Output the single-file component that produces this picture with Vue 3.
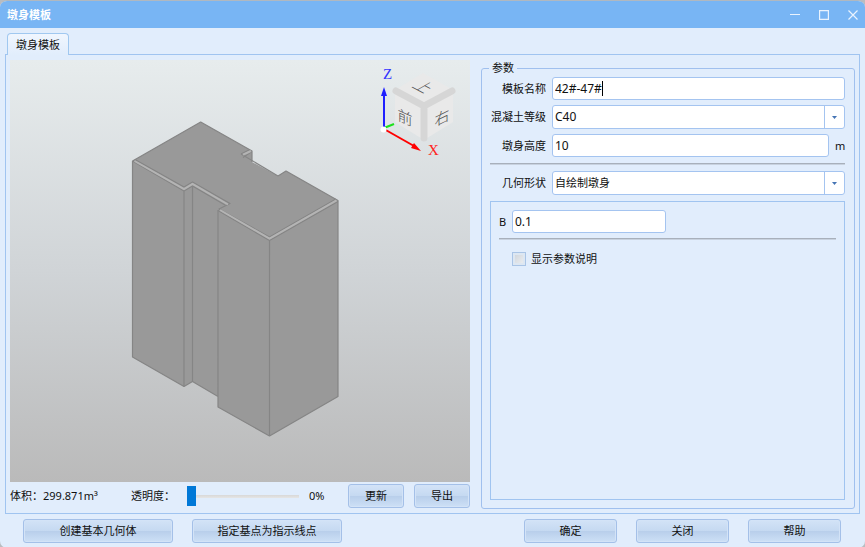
<script setup>
import { ref } from 'vue'

const name = ref('42#-47#')
const grade = ref('C40')
const height = ref('10')
const shape = ref('自绘制墩身')
const b = ref('0.1')
const showHelp = ref(false)
const opacity = ref(0)
</script>

<template>
  <main class="window">
    <header class="titlebar">
      <h1>墩身模板</h1>
      <div class="controls">
        <button type="button" aria-label="最小化"><svg width="10" height="10" viewBox="0 0 10 10"><path d="M0 4.500H10" /></svg></button>
        <button type="button" aria-label="最大化"><svg width="10" height="10" viewBox="0 0 10 10"><path d="M.6.6H9.4V9.4H.6Z" /></svg></button>
        <button type="button" aria-label="关闭窗口"><svg width="10" height="10" viewBox="0 0 10 10"><path d="M.5.5L9.5 9.5M9.5.5L.5 9.5" /></svg></button>
      </div>
    </header>

    <nav class="tabs"><button type="button" class="tab">墩身模板</button></nav>

    <section class="panel">
      <div class="left">
        <div class="viewer">
          <svg class="scene" viewBox="10 60 460 422">
            <!-- pier solid -->
            <path class="face" d="M132.5 161L200.7 122L252 151V162L278 176L286 171L338 200.5V396.5L269.5 436L218 407V396.5L192.5 381.5L184 386.5L132.5 357Z" />
            <path class="edge" d="M132.5 161L200.7 122L252 151V162M252 151.5L243 157.500M278 176L286 171L338 200.5V396.5L269.5 436L218 407V210M218 396.5L192.5 381.5L184 386.5L132.5 357V161" />
            <path class="edge" d="M241 154L278 176M241 154L250 149.500" />
            <path class="edge" d="M135 159.5L184 187L192.5 182L230 203.500L219 209L269.5 237L336 199" />
            <path class="edge" d="M132.5 161L184 191V386.5M184 191L192.5 186V381.5M192.5 186L225 205M218 210.500L269.5 240.500V436M269.5 240.500L338 201.500" />
            <path class="rim" d="M134.500 161L184 189L192.5 184L228 204.500" />
            <path class="rim" d="M220 210L269.5 238.700L336.500 200.300" />
            <path class="rim" d="M243 154.700L251 151" />

            <!-- view cube -->
            <path d="M395 90L423 73L453 90V122L424 140L395 122Z" fill="#e9e9e9" />
            <path d="M396 91L424 106L452 91M424 106V138" fill="none" stroke="#d6d6d6" stroke-width="7" stroke-linecap="round" stroke-linejoin="round" />
            <text class="cube-text" transform="translate(405 117) skewY(24)" text-anchor="middle" y="6">前</text>
            <text class="cube-text" transform="translate(442 117) skewY(-26)" text-anchor="middle" y="6">右</text>
            <text class="cube-text" transform="translate(423 87) rotate(28) skewX(-32)" text-anchor="middle" y="5">上</text>

            <!-- axes -->
            <path d="M384 128L394 124" stroke="#1ee01e" stroke-width="2" />
            <path d="M384 129V94" stroke="#2020ff" stroke-width="2" />
            <path d="M384 87L387 96H381Z" fill="#2020ff" />
            <path d="M384 129L414 146" stroke="#f00" stroke-width="2" />
            <path d="M421 151L411 148L414 143Z" fill="#f00" />
            <circle cx="383.5" cy="129.5" r="3" fill="#fff" />
            <text x="383" y="79" class="axis" fill="#3434ff">Z</text>
            <text x="428" y="155" class="axis" fill="#f22">X</text>
          </svg>
        </div>
        <div class="status">
          <span class="volume">体积：299.871m³</span>
          <label for="opacity">透明度：</label>
          <input id="opacity" v-model="opacity" class="slider" type="range" min="0" max="100">
          <output for="opacity">{{ opacity }}%</output>
          <button type="button" class="btn">更新</button>
          <button type="button" class="btn">导出</button>
        </div>
      </div>

      <fieldset class="params">
        <legend>参数</legend>
        <div class="rows">
          <div class="row">
            <label for="name">模板名称</label>
            <div class="field">
              <input id="name" v-model="name" type="text">
              <i class="caret"></i>
            </div>
          </div>
          <div class="row">
            <label for="grade">混凝土等级</label>
            <div class="field">
              <select id="grade" v-model="grade"><option>C40</option></select>
              <span class="arrow"><svg width="5" height="3" viewBox="0 0 5 3"><path d="M0 0H5L2.500 3Z" /></svg></span>
            </div>
          </div>
          <div class="row">
            <label for="height">墩身高度</label>
            <div class="field"><input id="height" v-model="height" type="text"></div>
            <span class="unit">m</span>
          </div>
          <hr>
          <div class="row">
            <label for="shape">几何形状</label>
            <div class="field">
              <select id="shape" v-model="shape" class="cjk"><option>自绘制墩身</option></select>
              <span class="arrow"><svg width="5" height="3" viewBox="0 0 5 3"><path d="M0 0H5L2.500 3Z" /></svg></span>
            </div>
          </div>
        </div>
        <div class="box">
          <div class="brow">
            <label for="b">B</label>
            <input id="b" v-model="b" type="text">
          </div>
          <hr>
          <label class="check"><input v-model="showHelp" type="checkbox">显示参数说明</label>
        </div>
      </fieldset>
    </section>

    <footer class="actions">
      <button type="button" class="btn wide">创建基本几何体</button>
      <button type="button" class="btn wide">指定基点为指示线点</button>
      <span class="spacer"></span>
      <button type="button" class="btn mid">确定</button>
      <button type="button" class="btn mid">关闭</button>
      <button type="button" class="btn mid">帮助</button>
    </footer>
  </main>
</template>

<style>
body {
  background: #b9bcc0;
}
</style>

<style scoped>
* {
  box-sizing: border-box;
}
.window {
  display: flex;
  flex-direction: column;
  min-height: 100vh;
  overflow: hidden;
  border-top: 1px solid #b0b8c0;
  border-radius: 7px;
  background: #e1edfc;
  color: #101010;
  font: 11px/16px "Noto Sans", "Noto Sans CJK SC", sans-serif;
}
button,
input,
select {
  margin: 0;
  font: inherit;
  color: inherit;
}
.titlebar {
  display: flex;
  align-items: center;
  justify-content: space-between;
  height: 27px;
  padding: 0 7px;
  background: #78b5f4;
  color: #fff;
}
h1 {
  margin: 0;
  font-size: 11px;
  font-weight: 700;
}
.controls {
  display: flex;
  gap: 19px;
}
.controls button {
  display: flex;
  padding: 0;
  border: 0;
  background: none;
}
.controls svg {
  fill: none;
  stroke: #e9f3fe;
  stroke-width: 1.2;
}
.tabs {
  display: flex;
  padding: 5px 7px 0;
}
.tab {
  z-index: 1;
  height: 22px;
  margin-bottom: -1px;
  padding: 0 8px;
  border: 1px solid #a0c8f0;
  border-bottom: 0;
  border-radius: 4px 4px 0 0;
  background: linear-gradient(#f0f6fe, #e1edfc);
}
.panel {
  flex: 1;
  display: grid;
  grid-template-columns: 460fr 374fr;
  gap: 11px;
  margin: 0 5px;
  padding: 5px 4px 4px;
  border: 1px solid #a0c4f0;
}
.left {
  display: flex;
  flex-direction: column;
  min-width: 0;
}
.viewer {
  flex: 1;
  display: flex;
  min-height: 0;
  background: linear-gradient(#e7eced, #d0d4d7 50%, #bababa);
}
.scene {
  flex: 1;
  width: 100%;
  min-width: 0;
}
.face {
  fill: #999;
}
.edge {
  fill: none;
  stroke: #858585;
  stroke-width: 1.2;
  stroke-linejoin: round;
}
.rim {
  fill: none;
  stroke: #b4b4b4;
  stroke-width: 2;
}
.cube-text {
  fill: #505050;
  font: 300 15px "Noto Sans CJK SC", sans-serif;
}
.axis {
  font: 15px "Liberation Serif", serif;
}
.status {
  display: flex;
  align-items: center;
  height: 27px;
  padding-top: 1px;
}
.volume {
  flex: 1;
}
.slider {
  appearance: none;
  width: 112px;
  height: 20px;
  margin: 0 10px 0 12px;
  background: linear-gradient(#d8d8d8, #e5e5e5) center / 100% 3px no-repeat;
}
.slider::-webkit-slider-thumb {
  appearance: none;
  width: 9px;
  height: 20px;
  background: #0078d7;
}
.status output {
  width: 29px;
}
.btn {
  height: 24px;
  padding: 0;
  border: 1px solid #a4c0e8;
  border-radius: 3px;
  background: linear-gradient(#d3e3f7, #c5d9f1 50%, #b9cfeb 52%, #cde0f6);
  box-shadow: inset 0 0 0 1px #d3e3f7;
}
.status .btn {
  width: 56px;
  margin-left: 10px;
}
.params {
  display: flex;
  flex-direction: column;
  min-width: 0;
  margin: 0;
  padding: 0 9px 8px 8px;
  border: 1px solid #a0c0ee;
  border-radius: 3px;
}
legend {
  margin-left: -1px;
  padding: 0 3px;
}
.rows {
  display: flex;
  flex-direction: column;
  gap: 5px;
  padding-top: 1px;
}
.rows hr {
  margin: 1px 0;
}
.row {
  display: flex;
  align-items: center;
  gap: 6px;
}
.row > label {
  width: 56px;
  text-align: right;
  white-space: nowrap;
}
.field {
  position: relative;
  flex: 1;
  display: flex;
  min-width: 0;
}
.unit {
  width: 10px;
  text-align: right;
}
input[type="text"],
select {
  width: 100%;
  min-width: 0;
  height: 23px;
  padding: 0 2px;
  border: 1px solid #a4c4f0;
  border-radius: 3px;
  background: #fff;
  font-size: 12px;
}
select {
  appearance: none;
  height: 24px;
}
.row .cjk {
  font-size: 11px;
}
.caret {
  position: absolute;
  left: 50px;
  top: 4px;
  width: 1px;
  height: 15px;
  background: #000;
}
.arrow {
  position: absolute;
  top: 1px;
  right: 1px;
  bottom: 1px;
  display: flex;
  align-items: center;
  justify-content: center;
  width: 20px;
  border-left: 1px solid #a4c4f0;
  pointer-events: none;
}
.arrow svg {
  fill: #4574b4;
}
hr {
  width: 100%;
  height: 2px;
  margin: 0;
  border: 0;
  border-top: 1px solid #a8b0bb;
  border-bottom: 1px solid #c8d2df;
}
.box {
  flex: 1;
  margin-top: 6px;
  padding: 8px;
  border: 1px solid #a0c4f0;
}
.brow {
  display: flex;
  align-items: center;
  margin-bottom: 5px;
}
.brow label {
  width: 13px;
}
.brow input[type="text"] {
  width: 154px;
}
.check {
  display: flex;
  align-items: center;
  gap: 5px;
  margin: 11px 0 0 13px;
}
.check input {
  appearance: none;
  width: 14px;
  height: 14px;
  border: 1px solid #a9c4e6;
  background: linear-gradient(135deg, #ccd2d9, #eff1f3);
  box-shadow: inset 0 0 0 2px #dde7f2;
}
.actions {
  display: flex;
  gap: 19px;
  padding: 5px 24px 5px 23px;
}
.wide {
  width: 150px;
}
.mid {
  width: 93px;
}
.spacer {
  flex: 1;
}
</style>
